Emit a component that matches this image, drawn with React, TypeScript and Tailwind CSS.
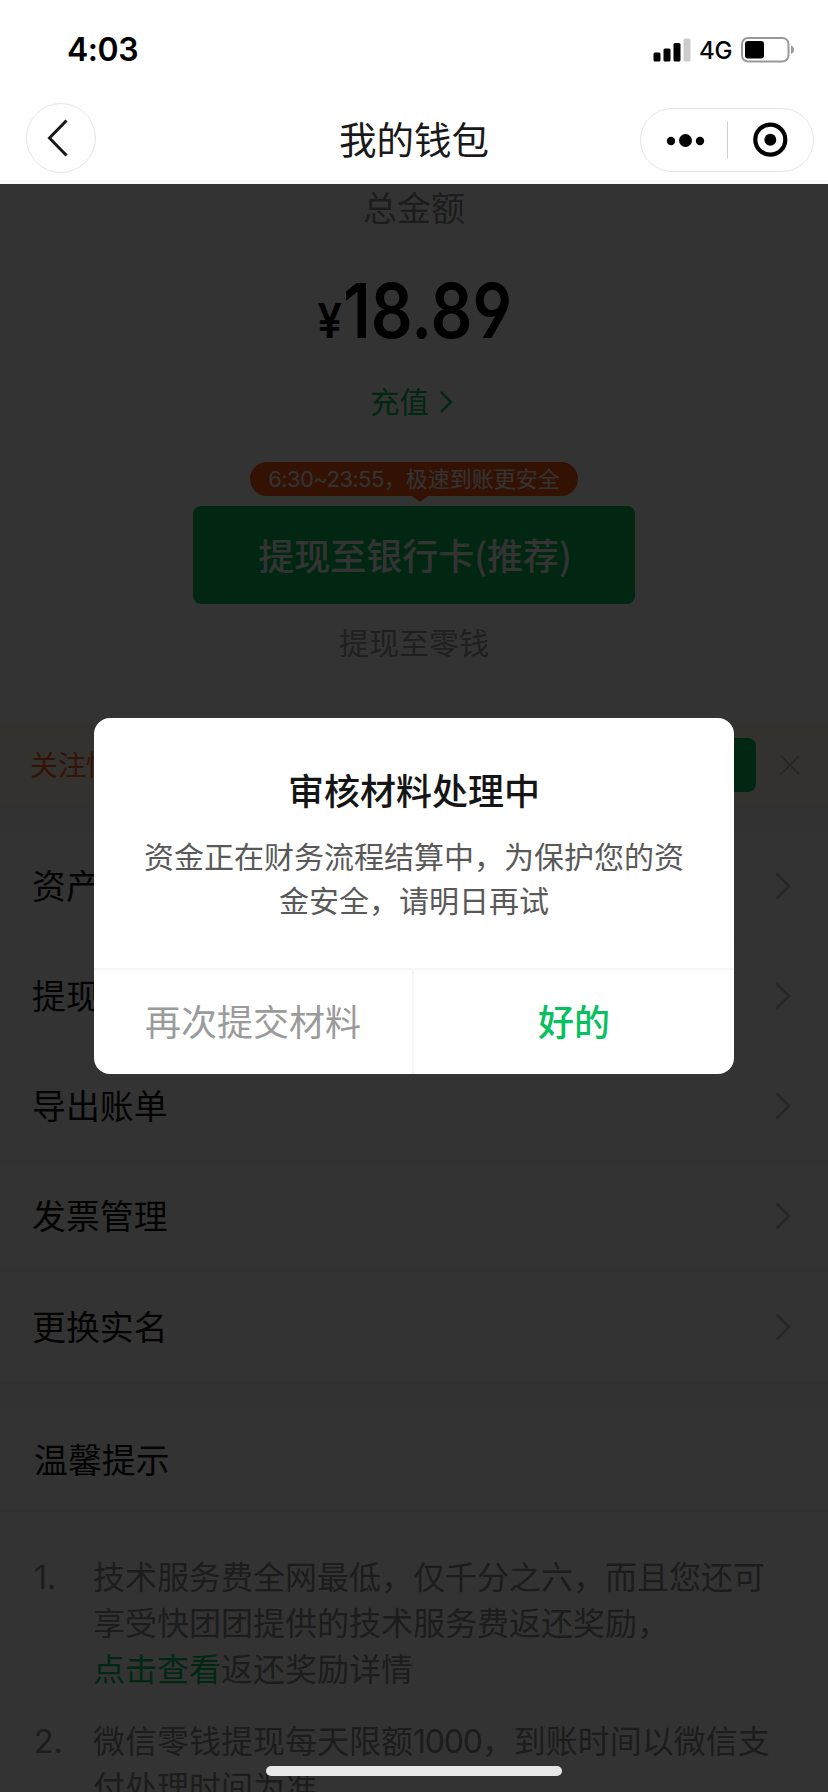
import type { ReactNode } from "react";

const MENU = ["资产明细", "提现记录", "导出账单", "发票管理", "更换实名"];

function StatusBar() {
  return (
    <div className="flex h-[98px] items-center justify-between pl-[67px] pr-[33px] pt-px text-black">
      <span className="font-['Inter',sans-serif] text-[32px] font-semibold leading-none tracking-[-0.5px]">4:03</span>
      <div className="flex items-center">
        <svg width="38" height="24" viewBox="0 0 38 24">
          <rect x="0.5" y="14.5" width="7" height="9" rx="1.5" />
          <rect x="10.5" y="10.5" width="7" height="13" rx="1.5" />
          <rect x="20.5" y="5" width="7" height="18.5" rx="1.5" />
          <rect x="30.5" y="0.5" width="7" height="23" rx="1.5" fill="#cccccc" />
        </svg>
        <span className="ml-2 w-[42px] pt-[3px] font-['Inter',sans-serif] text-[24px] font-medium leading-none tracking-[-0.3px]">4G</span>
        <svg width="54" height="26" viewBox="0 0 54 26">
          <rect x="1" y="1" width="46.5" height="23.5" rx="6" fill="none" stroke="#999999" strokeWidth="2" />
          <rect x="4" y="4" width="19" height="17.5" rx="3" />
          <path d="M50 8.500c4 1.500 4 7 0 8.500z" fill="#999999" />
        </svg>
      </div>
    </div>
  );
}

function NavBar() {
  return (
    <div className="flex h-[86px] items-start justify-between border-b-4 border-[#fafafa] pl-[26px] pr-[14px]">
      <div className="flex w-[162px] pt-[5px]">
        <div className="flex h-[70px] w-[70px] items-center justify-center rounded-full border border-[#e6e6e6] pr-[6px]">
          <svg width="22" height="38" viewBox="0 0 22 38" fill="none" stroke="#1a1a1a" strokeWidth="3">
            <path d="M19.500 1.500 2.500 19 19.500 36.500" />
          </svg>
        </div>
      </div>
      <h1 className="mt-[14px] text-[37.500px] leading-[58px] text-[#191919]">我的钱包</h1>
      <div className="mt-[10px] flex h-[64px] w-[174px] items-center rounded-full border border-[#e6e6e6]">
        <svg width="172" height="62" viewBox="0 0 172 62">
          <circle cx="30" cy="32" r="4.200" />
          <circle cx="44.500" cy="31.500" r="6.500" />
          <circle cx="59" cy="32" r="4.200" />
          <path d="M86.500 12.500v37" stroke="#cfcfcf" />
          <circle cx="129.300" cy="30.700" r="15" fill="none" stroke="#000" strokeWidth="4.200" />
          <circle cx="129.300" cy="30.700" r="6" />
        </svg>
      </div>
    </div>
  );
}

function Balance() {
  return (
    <section className="flex h-[540px] flex-col items-center bg-white">
      <p className="pt-[2px] text-[34px] leading-[46px] text-[#8c8c8c]">总金额</p>
      <p className="mt-[36px] flex h-[84px] w-[196px] items-baseline justify-center font-['Inter',sans-serif] font-semibold leading-[86px] text-black">
        <span className="mr-px origin-right scale-x-[0.92] text-[48px]">¥</span>
        <span className="-mr-[24px] origin-left scale-x-[0.875] text-[75px] [font-feature-settings:'cv04','ss01']">18.89</span>
      </p>
      <div className="mt-[28px] flex h-[44px] items-center gap-[10px] pr-[5px] text-[#07c160]">
        <span className="text-[29.500px] leading-[44px]">充值</span>
        <svg width="14" height="24" viewBox="0 0 14 24" fill="none" stroke="currentColor" strokeWidth="2.500">
          <path d="M2 2l10 10L2 22" />
        </svg>
      </div>
      <div className="mt-[38px] flex h-[34px] w-[328px] items-center justify-center rounded-full bg-[#ff5a14] text-[22px] text-white">
        <span className="tracking-[-0.6px]">6:30~23:55</span>，极速到账更安全
      </div>
      <svg className="ml-[12px]" width="16" height="6" viewBox="0 0 16 6">
        <path d="M0 0h16L8 6z" fill="#ff5a14" />
      </svg>
      <button className="mt-[4px] h-[98px] w-[442px] rounded-lg bg-[#07c160] pb-[3px] pl-[2px] font-['Noto_Sans_CJK_SC',sans-serif] text-[36px] font-medium leading-[54px] text-white">
        提现至银行卡(推荐)
      </button>
      <p className="mt-[17px] text-[30px] leading-[44px] text-[#999]">提现至零钱</p>
    </section>
  );
}

function Notice() {
  return (
    <div className="flex h-[82px] items-center bg-[#fffbe8] pl-[30px] pr-[28px]">
      <span className="flex-1 pt-[2px] text-[28px] text-[#ff5a30]">关注快团团服务号</span>
      <button className="h-[54px] w-[140px] rounded-lg bg-[#07c160] text-[26px] text-white">去关注</button>
      <svg className="ml-[24px]" width="20" height="20" viewBox="0 0 20 20" stroke="#c4bca8" strokeWidth="2">
        <path d="M1 1l18 18M19 1L1 19" />
      </svg>
    </div>
  );
}

function MenuRow({ label, last }: { label: string; last: boolean }) {
  return (
    <li className={last ? "flex h-[110px] items-center justify-between bg-white pl-[32px] pr-[37px]" : "flex h-[110px] items-center justify-between border-b-2 border-[#f8f8f8] bg-white pl-[32px] pr-[37px]"}>
      <span className="pt-[3px] text-[33.900px] text-[#111]">{label}</span>
      <svg width="16" height="28" viewBox="0 0 16 28" fill="none" stroke="#bcbcbc" strokeWidth="2.800">
        <path d="M1.500 1.500L14 14 1.500 26.500" />
      </svg>
    </li>
  );
}

function Tip({ index, children }: { index: number; children: ReactNode }) {
  return (
    <li className="flex">
      <span className="w-[59px] shrink-0 font-['Inter',sans-serif]">{index}.</span>
      <p className="whitespace-nowrap">{children}</p>
    </li>
  );
}

function Dialog() {
  return (
    <div className="mt-[534px] h-[356px] w-[640px] overflow-hidden rounded-2xl bg-white text-center">
      <div className="h-[250px] pt-[48px]">
        <h2 className="text-[36px] font-medium leading-[52px] text-[#151515]">审核材料处理中</h2>
        <p className="mt-[17px] text-[30px] leading-[44px] text-[#595959]">
          资金正在财务流程结算中，为保护您的资
          <br />
          金安全，请明日再试
        </p>
      </div>
      <div className="flex h-[106px] border-t-2 border-[#f6f6f6] text-[36px]">
        <button className="w-[320px] border-r-2 border-[#f6f6f6] pt-px text-[#9b9b9b]">再次提交材料</button>
        <button className="w-[320px] pt-px font-medium text-[#07c160]">好的</button>
      </div>
    </div>
  );
}

export default function App() {
  return (
    <div className="flex h-[1792px] w-[828px] flex-col overflow-hidden bg-white font-['Inter','Noto_Sans_CJK_SC',sans-serif]">
      <StatusBar />
      <NavBar />
      <main className="relative h-[1608px] overflow-hidden bg-[#f2f2f2]">
        <Balance />
        <Notice />
        <ul className="mt-[26px]">
          {MENU.map((label, i) => (
            <MenuRow key={label} label={label} last={i === MENU.length - 1} />
          ))}
        </ul>
        <section className="mt-[26px] h-[400px] bg-white">
          <h2 className="flex h-[104px] items-center border-b-2 border-[#f5f5f5] pl-[34px] pt-[5px] text-[33.900px] text-[#111]">
            温馨提示
          </h2>
          <ol className="flex flex-col gap-[26px] pl-[34px] pt-[43px] text-[32px] leading-[46px] text-[#8c8c8c]">
            <Tip index={1}>
              技术服务费全网最低，仅千分之六，而且您还可
              <br />
              享受快团团提供的技术服务费返还奖励，
              <br />
              <span className="text-[#07c160]">点击查看</span>返还奖励详情
            </Tip>
            <Tip index={2}>
              微信零钱提现每天限额<span className="tracking-[-1.200px]">1000</span>，到账时间以微信支
              <br />
              付处理时间为准
            </Tip>
          </ol>
        </section>
        <div className="absolute inset-0 flex flex-col items-center justify-between bg-black/80 pb-4">
          <Dialog />
          <div className="h-[10px] w-[296px] rounded-full bg-[#e8e8e8]" />
        </div>
      </main>
    </div>
  );
}
